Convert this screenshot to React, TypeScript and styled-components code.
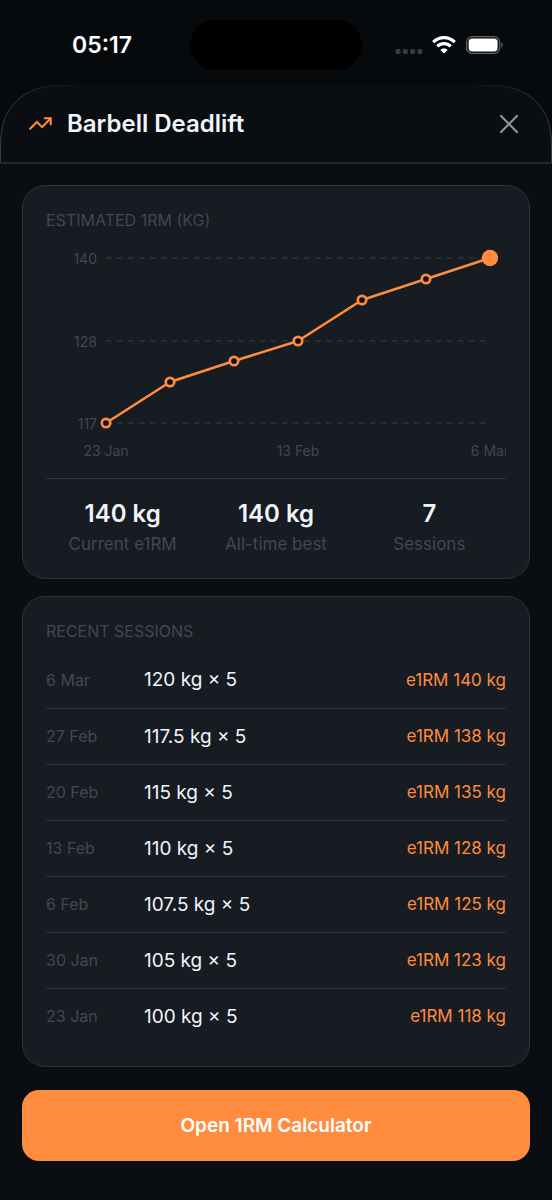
import React from "react";
import styled, { createGlobalStyle } from "styled-components";

const color = {
  backdrop: "#070a0d",
  sheet: "#0a0d12",
  card: "#171b22",
  line: "#2f343b",
  muted: "#434750",
  text: "#f0f5fb",
  icon: "#8b949e",
  accent: "#ff8c3f",
};

const GlobalStyle = createGlobalStyle`
  *, *::before, *::after { box-sizing: border-box; }
  body {
    margin: 0;
    background: ${color.sheet};
    color: ${color.text};
    font-family: Inter, Roboto, "Liberation Sans", sans-serif;
    -webkit-font-smoothing: antialiased;
  }
`;

const Page = styled.div`
  min-height: 100vh;
  display: flex;
  flex-direction: column;
`;

const StatusBar = styled.div`
  display: grid;
  grid-template-columns: 1fr 172px 1fr;
  align-items: center;
  height: 85px;
  padding-bottom: 4px;
  background: ${color.backdrop};
`;

const Clock = styled.time`
  padding-left: 14px;
  text-align: center;
  font-size: 23px;
  line-height: 28px;
  font-weight: 600;
  color: #fff;
  padding-top: 8px;
`;

const Island = styled.div`
  height: 50px;
  margin-top: 8px;
  border-radius: 25px;
  background: #000;
`;

const StatusIcons = styled.svg`
  justify-self: end;
  width: 110px;
  height: 20px;
  margin: 8px 48px 0 0;
`;

const Sheet = styled.main`
  display: flex;
  flex-direction: column;
  flex: 1;
`;

const Header = styled.header`
  position: relative;
  display: flex;
  align-items: center;
  gap: 14px;
  height: 79px;
  padding: 0 28px;
  border-bottom: 2px solid #22272d;
  background: ${color.sheet};
`;

const Corner = styled.svg<{ $side: "left" | "right" }>`
  position: absolute;
  top: 0;
  ${(p) => p.$side}: 0;
  width: 84px;
  height: 77px;
  pointer-events: none;
  transform: ${(p) => (p.$side === "right" ? "scaleX(-1)" : "none")};
`;

const TrendIcon = styled.svg`
  width: 25px;
  height: 25px;
  flex: none;
`;

const Title = styled.h1`
  flex: 1;
  margin: 0;
  font-size: 24px;
  line-height: 32px;
  font-weight: 600;
`;

const CloseButton = styled.button`
  display: flex;
  padding: 4px;
  border: 0;
  background: none;
  color: ${color.icon};
  cursor: pointer;
`;

const Content = styled.div`
  display: flex;
  flex-direction: column;
  gap: 17px;
  padding: 21px 22px 38px;
`;

const Card = styled.section`
  padding: 22px 23px;
  border: 1px solid ${color.line};
  border-radius: 23px;
  background: ${color.card};
`;

const CardTitle = styled.h2`
  margin: 0;
  font-size: 16px;
  line-height: 24px;
  font-weight: 400;
  color: ${color.muted};
`;

const Chart = styled.svg`
  display: block;
  width: 100%;
  height: auto;
  margin-top: 4px;
  overflow: hidden;
  font-size: 14px;
  fill: ${color.muted};
`;

const Stats = styled.dl`
  display: grid;
  grid-template-columns: repeat(3, 1fr);
  margin: 0;
  padding-top: 16px;
  border-top: 1px solid ${color.line};
  text-align: center;
`;

const Stat = styled.div`
  display: flex;
  flex-direction: column-reverse;
`;

const StatLabel = styled.dt`
  font-size: 17px;
  line-height: 23px;
  color: ${color.muted};
`;

const StatValue = styled.dd`
  margin: 0;
  font-size: 24px;
  line-height: 38px;
  font-weight: 600;
`;

const SessionTable = styled.table`
  width: 100%;
  margin-top: 9px;
  border-collapse: collapse;
  table-layout: fixed;
`;

const SessionRow = styled.tr`
  height: 56px;
  & + & {
    border-top: 1px solid ${color.line};
  }
`;

const DateCell = styled.th`
  width: 98px;
  padding: 0;
  text-align: left;
  font-size: 16px;
  font-weight: 400;
  color: ${color.muted};
`;

const SetCell = styled.td`
  padding: 0;
  font-size: 19px;
`;

const MaxCell = styled.td`
  padding: 0;
  text-align: right;
  font-size: 17px;
  color: ${color.accent};
`;

const PrimaryButton = styled.button`
  height: 71px;
  margin-top: 6px;
  border: 0;
  border-radius: 17px;
  background: ${color.accent};
  color: #fff;
  font-family: inherit;
  font-size: 19px;
  font-weight: 600;
  cursor: pointer;
`;

const points = [
  [60, 174],
  [124, 133],
  [188, 112],
  [252, 92],
  [316, 51],
  [380, 30],
  [444, 9],
];

const gridLines = [
  { label: "140", y: 9 },
  { label: "128", y: 92 },
  { label: "117", y: 174 },
];

const dateTicks = [
  { label: "23 Jan", x: 60 },
  { label: "13 Feb", x: 252 },
  { label: "6 Mar", x: 444 },
];

const stats = [
  { label: "Current e1RM", value: "140 kg" },
  { label: "All-time best", value: "140 kg" },
  { label: "Sessions", value: "7" },
];

const sessions = [
  ["6 Mar", "120 kg × 5", "e1RM 140 kg"],
  ["27 Feb", "117.5 kg × 5", "e1RM 138 kg"],
  ["20 Feb", "115 kg × 5", "e1RM 135 kg"],
  ["13 Feb", "110 kg × 5", "e1RM 128 kg"],
  ["6 Feb", "107.5 kg × 5", "e1RM 125 kg"],
  ["30 Jan", "105 kg × 5", "e1RM 123 kg"],
  ["23 Jan", "100 kg × 5", "e1RM 118 kg"],
];

function SheetCorner({ side }: { side: "left" | "right" }) {
  const id = `corner-${side}`;
  return (
    <Corner $side={side} viewBox="0 0 84 77" aria-hidden="true">
      <defs>
        <linearGradient id={id} gradientUnits="userSpaceOnUse" x1="0" y1="77" x2="84" y2="0">
          <stop offset="0" stopColor="#3b4045" />
          <stop offset="0.6" stopColor="#2a2e32" />
          <stop offset="1" stopColor="#2a2e32" stopOpacity="0" />
        </linearGradient>
      </defs>
      <path d="M0 0H62C22 0 0 22 0 60Z" fill={color.backdrop} />
      <path d="M.5 77V60C.5 22 22 .5 62 .5H84" fill="none" stroke={`url(#${id})`} />
    </Corner>
  );
}

export default function App() {
  return (
    <Page>
      <GlobalStyle />
      <StatusBar>
        <Clock>05:17</Clock>
        <Island />
        <StatusIcons viewBox="0 0 110 20" aria-hidden="true">
          <g fill="#3a3d40">
            <rect x="1.5" y="14" width="5" height="5" rx="1.7" />
            <rect x="8.8" y="14" width="5" height="5" rx="1.7" />
            <rect x="16.1" y="14" width="5" height="5" rx="1.7" />
            <rect x="23.4" y="14" width="5" height="5" rx="1.7" />
          </g>
          <g fill="none" stroke="#fff" strokeWidth="3.2">
            <path d="M39.2 7.2C45.5 1.2 54.5 1.2 60.8 7.2" />
            <path d="M43.3 11.4C47.2 7.6 52.8 7.6 56.7 11.4" />
          </g>
          <path d="M50 18.4 46.4 14.900C48.500 13 51.500 13 53.600 14.900Z" fill="#fff" />
          <rect x="72.6" y="1.6" width="33" height="16.800" rx="5.5" fill="none" stroke="#5f6265" strokeWidth="1.3" />
          <rect x="74.6" y="3.6" width="29" height="12.800" rx="3.6" fill="#fff" />
          <path d="M107.3 7.3C109.4 8.2 109.4 11.8 107.3 12.7Z" fill="#5f6265" />
        </StatusIcons>
      </StatusBar>
      <Sheet>
        <Header>
          <SheetCorner side="left" />
          <SheetCorner side="right" />
          <TrendIcon
            viewBox="0 0 24 24"
            fill="none"
            stroke={color.accent}
            strokeWidth="2"
            strokeLinecap="round"
            strokeLinejoin="miter"
            aria-hidden="true"
          >
            <path d="M21.500 7.500l-8 8-5-5L2 17" />
            <path d="M16 7h5.800v5.800" />
          </TrendIcon>
          <Title>Barbell Deadlift</Title>
          <CloseButton type="button" aria-label="Close">
            <svg width="22" height="22" viewBox="0 0 22 22" fill="none" stroke="currentColor" strokeWidth="2.2" strokeLinecap="round">
              <path d="M3 3l16 16M19 3L3 19" />
            </svg>
          </CloseButton>
        </Header>
        <Content>
          <Card>
            <CardTitle>ESTIMATED 1RM (KG)</CardTitle>
            <Chart viewBox="0 0 460 242" role="img" aria-label="Estimated 1RM from 117 kg on 23 Jan to 140 kg on 6 Mar">
              <g transform="translate(0 13)">
                {gridLines.map((line) => (
                  <g key={line.label}>
                    <text x="51" y={line.y + 6} textAnchor="end">
                      {line.label}
                    </text>
                    <path d={`M60 ${line.y}H440`} stroke={color.line} strokeWidth="1.4" strokeDasharray="5.5 5.5" />
                  </g>
                ))}
                {dateTicks.map((tick) => (
                  <text key={tick.label} x={tick.x} y="207" textAnchor="middle">
                    {tick.label}
                  </text>
                ))}
                <polyline points={points.map((p) => p.join(",")).join(" ")} fill="none" stroke={color.accent} strokeWidth="2.6" strokeLinejoin="round" />
                {points.map(([x, y], i) =>
                  i === points.length - 1 ? (
                    <circle key={x} cx={x} cy={y} r="8.2" fill={color.accent} />
                  ) : (
                    <circle key={x} cx={x} cy={y} r="4.2" fill={color.sheet} stroke={color.accent} strokeWidth="2.7" />
                  ),
                )}
              </g>
            </Chart>
            <Stats>
              {stats.map((stat) => (
                <Stat key={stat.label}>
                  <StatLabel>{stat.label}</StatLabel>
                  <StatValue>{stat.value}</StatValue>
                </Stat>
              ))}
            </Stats>
          </Card>
          <Card>
            <CardTitle>RECENT SESSIONS</CardTitle>
            <SessionTable>
              <tbody>
                {sessions.map(([date, set, max]) => (
                  <SessionRow key={date}>
                    <DateCell scope="row">{date}</DateCell>
                    <SetCell>{set}</SetCell>
                    <MaxCell>{max}</MaxCell>
                  </SessionRow>
                ))}
              </tbody>
            </SessionTable>
          </Card>
          <PrimaryButton type="button">Open 1RM Calculator</PrimaryButton>
        </Content>
      </Sheet>
    </Page>
  );
}
